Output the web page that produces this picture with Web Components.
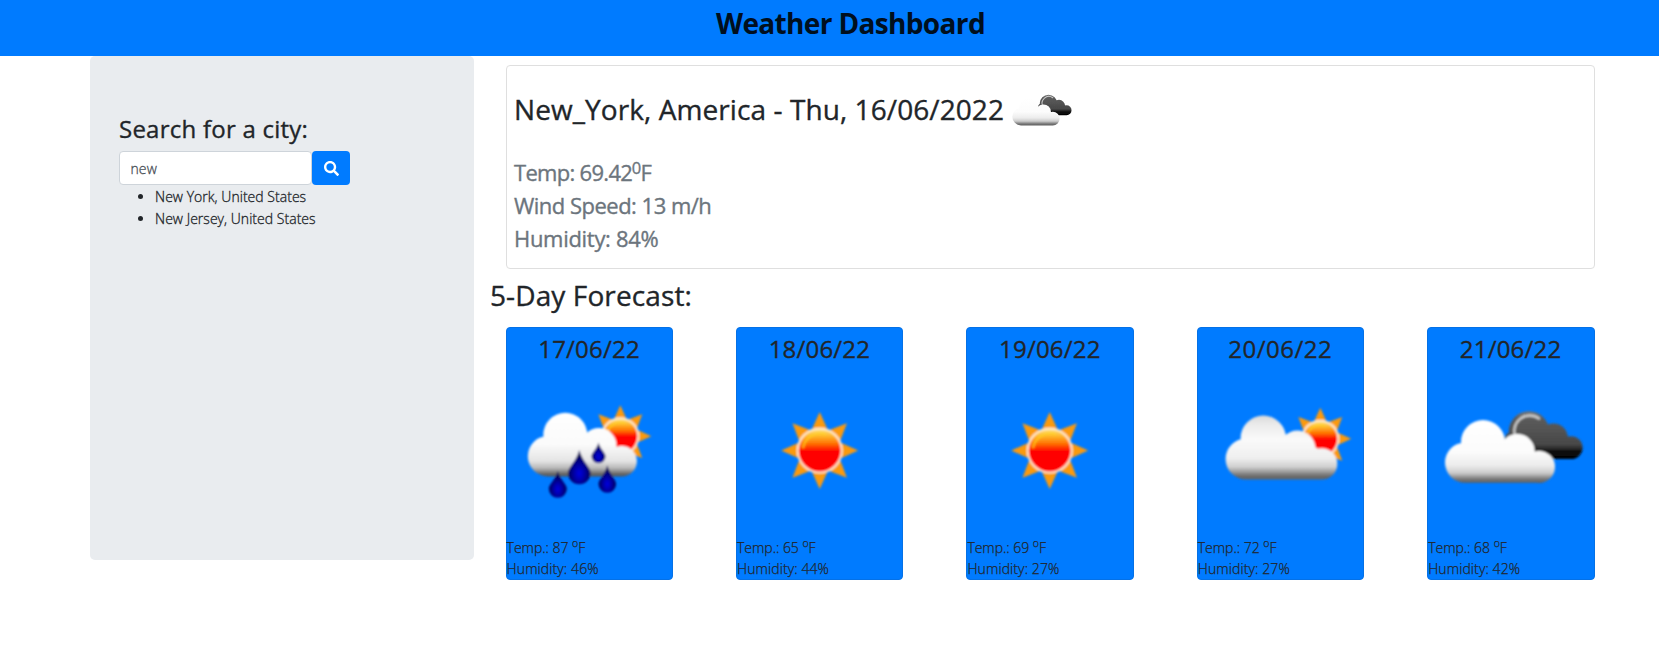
<!DOCTYPE html>
<html lang="en">
<head>
<meta charset="utf-8">
<title>Weather Dashboard</title>
<style>
body{margin:0;background:#fff;color:#212529;font-family:"Open Sans","Noto Sans",sans-serif;font-size:14px;line-height:21px}
</style>
</head>
<body>
<weather-app></weather-app>
<script>
const define=(name,html,setup)=>{
  const t=document.createElement('template');
  t.innerHTML=html;
  customElements.define(name,class extends HTMLElement{
    constructor(){super();this.attachShadow({mode:'open'}).appendChild(t.content.cloneNode(true));}
    connectedCallback(){if(setup)setup(this,this.shadowRoot);}
  });
};

/* Weather pictures share one 165 x 165 canvas. */
const rays=(cx,cy,r,base,half)=>{
  let d='';
  for(let i=0;i<8;i++){
    const a=i*Math.PI/4,c=Math.cos(a),s=Math.sin(a);
    d+=`M${cx+r*c} ${cy+r*s}L${cx+base*c-half*s} ${cy+base*s+half*c}L${cx+base*c+half*s} ${cy+base*s-half*c}Z`;
  }
  return d;
};
const sun=(cx,cy,r,disk)=>`<path d="${rays(cx,cy,r,disk*.9,disk*.42)}" fill="#fb9a0c"/>
<circle cx="${cx}" cy="${cy}" r="${disk+2}" fill="#ffecd2"/><circle cx="${cx}" cy="${cy}" r="${disk}" fill="url(#sun)"/>
<path d="M${cx-disk*.8} ${cy-disk*.1}A${disk*.82} ${disk*.82} 0 0 1 ${cx+disk*.3} ${cy-disk*.76}" fill="none" stroke="#ffd21e" stroke-opacity=".6" stroke-width="${disk*.14}"/>`;
const shape=(cs,base)=>cs.map(([x,y,r])=>`M${x-r} ${y}a${r} ${r} 0 1 1 ${2*r} 0a${r} ${r} 0 1 1 ${-2*r} 0Z`).join('')+base;
const drop=(x,t,b,h)=>{const cy=b-h;return `<path d="M${x} ${t}C${x+h*.25} ${t+(cy-t)*.5} ${x+h} ${cy-h*.5} ${x+h} ${cy}A${h} ${h} 0 0 1 ${x-h} ${cy}C${x-h} ${cy-h*.5} ${x-h*.25} ${t+(cy-t)*.5} ${x} ${t}Z" fill="url(#drop)"/>`;};
const lin=(id,y1,y2,stops)=>`<linearGradient id="${id}" gradientUnits="userSpaceOnUse" x1="0" x2="0" y1="${y1}" y2="${y2}">${stops.map(([o,c])=>`<stop offset="${o}" stop-color="${c}"/>`).join('')}</linearGradient>`;
const whiteStops=[[0,'#fff'],[.5,'#fcfcfc'],[.72,'#ececec'],[.84,'#ccc'],[.94,'#777'],[1,'#5c5c5c']];
const defs=`<linearGradient id="sun" x1="0" x2="0" y1="0" y2="1"><stop offset="0" stop-color="#ffe27a"/><stop offset=".16" stop-color="#ffb52a"/><stop offset=".34" stop-color="#ff7000"/><stop offset=".52" stop-color="#f00"/><stop offset="1" stop-color="#f00"/></linearGradient>
<radialGradient id="drop" cy=".68"><stop offset="0" stop-color="#0000e0"/><stop offset=".45" stop-color="#0000a8"/><stop offset="1" stop-color="#000058"/></radialGradient>
<filter id="soft" x="-10%" y="-10%" width="120%" height="120%"><feGaussianBlur stdDeviation=".9"/></filter>`;
const pictures={
  sun:()=>sun(82.7,82.5,38.5,21),
  partly:()=>lin('w',47,112,[[0,'#d9d9d9'],[.16,'#ececec'],[.38,'#fafafa'],[.66,'#efefef'],[.8,'#cfcfcf'],[.9,'#888'],[.95,'#666'],[1,'#666']])
    +sun(122.3,70.8,31,17)
    +`<path fill="url(#w)" d="${shape([[65.3,70.2,22.7],[48.2,91,20.6],[99.3,80.6,18.1],[123.7,95.9,15.6]],'M48 111.6V72H108L124 84V111.6Z')}"/>`,
  rain:()=>lin('w',44,108.5,[[0,'#fff'],[.5,'#fbfbfb'],[.76,'#e4e4e4'],[.87,'#b8b8b8'],[.96,'#666'],[1,'#555']])
    +sun(113.3,68.2,31,17)
    +`<path fill="url(#w)" d="${shape([[58.3,66.8,22],[41,88.2,20.2],[92,77.5,17.5],[114.7,93.3,15.2]],'M41 108.4V70H100L115 84V108.4Z')}"/>`
    +drop(72.3,82,116.2,11.3)+drop(91.5,74.5,95.2,7)+drop(50.8,103,129.8,9)+drop(100.3,97.3,124.8,8.8),
  clouds:()=>lin('w',52,115,whiteStops)+lin('k',43,91,[[0,'#7a7a7a'],[.15,'#5c5c5c'],[.7,'#484848'],[.84,'#111'],[1,'#000']])
    +`<path fill="url(#k)" d="${shape([[101,63.5,20.2],[125.5,69.6,14.2],[143.2,79.6,11.4],[88,74,12]],'M88 91V66H138L143.2 72V91Z')}"/>`
    +`<path d="M88 70A15.500 15.500 0 0 1 111 50.500" fill="none" stroke="#ddd" stroke-opacity=".85" stroke-width="2.4" stroke-linecap="round"/>`
    +`<path fill="url(#w)" d="${shape([[55,74,22],[37.2,94.6,20.2],[89.3,83.5,17.5],[111,98.9,16]],'M37 114.8V76H96L111 90V114.8Z')}"/>`
};
define('weather-icon',`<style>:host{display:block;width:165px;height:165px;flex:none}svg{display:block;width:100%;height:100%}</style><span></span>`,(el,r)=>{
  r.querySelector('span').innerHTML=`<svg viewBox="0 0 165 165" aria-hidden="true"><defs>${defs}</defs><g filter="url(#soft)">${pictures[el.getAttribute('kind')]()}</g></svg>`;
});

define('app-header',`<style>
:host{display:block;height:50px;padding-top:6px;background:#007bff;color:#000f1e;text-align:center}
h1{margin:0 0 0 42px;font-size:28px;line-height:34px;font-weight:700;letter-spacing:-.65px}
</style><h1><slot></slot></h1>`);

define('city-search',`<style>
:host{display:block;box-sizing:border-box;width:384px;height:504px;padding:58px 29px;background:#e9ecef;border-radius:5px}
h4{margin:0 0 8px;font-size:24px;line-height:29px;font-weight:500;letter-spacing:.24px;-webkit-text-stroke:.35px}
form{display:flex;margin:0}
input{box-sizing:border-box;width:193px;height:34px;margin:0;padding:1px 10.500px 0;border:1px solid #ced4da;border-radius:4px;background:#fff;color:#495057;font:300 14px/21px "Open Sans","Noto Sans",sans-serif;letter-spacing:.1px;-webkit-text-stroke:.3px}
button{display:flex;align-items:center;justify-content:center;box-sizing:border-box;width:38px;height:34px;margin:0;padding:0;border:0;border-radius:4px;background:#007bff}
svg{display:block;width:15px;height:15px}
ul{margin:0;padding:.5px 0 0 36px;font-weight:300;line-height:22px;letter-spacing:.03px;-webkit-text-stroke:.3px}
li::marker{font-size:14px}
</style>
<h4>Search for a city:</h4>
<form><input value="new" aria-label="City"><button type="button" aria-label="Search"><svg viewBox="0 0 512 512"><path fill="#fff" d="M505 442.7 405.300 343c-4.500-4.500-10.600-7-17-7H372c27.600-35.300 44-79.700 44-128C416 93.100 322.900 0 208 0S0 93.100 0 208s93.100 208 208 208c48.300 0 92.700-16.400 128-44v16.300c0 6.400 2.500 12.500 7 17l99.700 99.700c9.400 9.400 24.600 9.400 33.900 0l28.300-28.300c9.400-9.400 9.400-24.600.1-34zM208 336c-70.700 0-128-57.200-128-128 0-70.700 57.200-128 128-128 70.700 0 128 57.200 128 128 0 70.700-57.200 128-128 128z"/></svg></button></form>
<ul><li>New York, United States</li><li>New Jersey, United States</li></ul>`);

define('current-weather',`<style>
:host{display:block;box-sizing:border-box;height:204px;padding:10px 7px 0;border:1px solid #dfdfdf;border-radius:4px}
header{display:flex;height:70px}
h3{margin:16px 0 0;font-size:28px;line-height:34px;font-weight:500;letter-spacing:.08px;white-space:nowrap;-webkit-text-stroke:.35px}
weather-icon{width:71px;height:71px;margin-left:.5px}
.d{color:#6c757d;font-size:22px;line-height:33px;font-weight:500;padding-top:10px;-webkit-text-stroke:.35px}
.t{letter-spacing:-.7px}.t sup{margin-left:-.5px}.w{letter-spacing:-.51px}.h{letter-spacing:-.3px}
sup{position:relative;top:-7.5px;font-size:75%;line-height:0;vertical-align:baseline}
</style>
<header><h3>New_York, America - Thu, 16/06/2022</h3><weather-icon kind="clouds"></weather-icon></header>
<div class="d"><div class="t">Temp: 69.42<sup>0</sup>F</div><div class="w">Wind Speed: 13 m/h</div><div class="h">Humidity: 84%</div></div>`);

define('forecast-card',`<style>
:host{display:flex;flex-direction:column;box-sizing:border-box;width:167.400px;height:253px;padding-top:6px;border:1px solid #0571e6;border-radius:4px;background:#007bff}
h4{margin:0;text-align:center;font-size:24px;line-height:29px;font-weight:500;letter-spacing:var(--track,.2px);text-indent:-.5px;-webkit-text-stroke:.35px}
weather-icon{margin:5px 0 4px}
p{margin:0;font-weight:300;line-height:21px;letter-spacing:.1px;-webkit-text-stroke:.25px}
.t{letter-spacing:-.02px}
sup{position:relative;top:-6px;font-size:75%;line-height:0;vertical-align:baseline}
</style>
<h4><slot name="date"></slot></h4><weather-icon></weather-icon>
<p class="t">Temp.: <slot name="temp"></slot> <sup>o</sup>F</p><p>Humidity: <slot name="humidity"></slot></p>`);

const days=[['17/06/22','rain',87,46],['18/06/22','sun',65,44],['19/06/22','sun',69,27],['20/06/22','partly',72,27],['21/06/22','clouds',68,42]];
customElements.define('forecast-list',class extends HTMLElement{
  connectedCallback(){
    const r=this.attachShadow({mode:'open'});
    r.innerHTML=`<style>:host{display:flex;justify-content:space-between}</style>`;
    for(const [d,k,t,h] of days){
      const c=document.createElement('forecast-card');
      c.innerHTML=`<span slot="date">${d}</span><span slot="temp">${t}</span><span slot="humidity">${h}%</span>`;
      if(k==='partly')c.style.setProperty('--track','.5px');
      c.shadowRoot.querySelector('weather-icon').setAttribute('kind',k);
      r.appendChild(c);
    }
  }
});

define('weather-app',`<style>
:host{display:block}
main{display:flex;padding-left:90px}
section{width:1105px;margin-left:16px;padding-top:9px}
current-weather{margin-left:16px}
forecast-list{margin-left:15.600px;width:1089px}
h3{margin:9px 0 15px;font-size:28px;line-height:34px;font-weight:500;letter-spacing:.11px;-webkit-text-stroke:.35px}
</style>
<app-header>Weather Dashboard</app-header>
<main><city-search></city-search><section><current-weather></current-weather><h3>5-Day Forecast:</h3><forecast-list></forecast-list></section></main>`);
</script>
</body>
</html>
